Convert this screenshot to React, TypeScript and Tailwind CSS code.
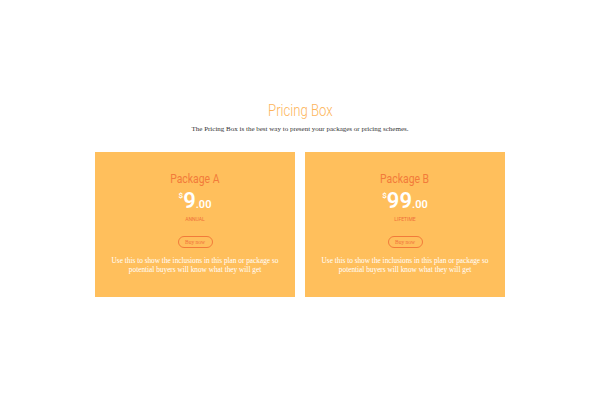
const plans = [
  { name: "Package A", price: "9", term: "ANNUAL" },
  { name: "Package B", price: "99", term: "LIFETIME" },
];

const Card = ({ name, price, term }: { name: string; price: string; term: string }) => {
  return (
    <div className="w-[200px] h-[145px] bg-[#ffbf5c] flex flex-col items-center pt-[19px]">
      <p className="font-['Roboto',sans-serif] text-[13px] leading-[15px] text-[#f27b3a] scale-x-[0.8]">{name}</p>
      <div className="flex items-start mt-[4px] text-white font-['Roboto',sans-serif] font-semibold">
        <span className="text-[8px] leading-[10px] mt-[1px]">$</span>
        <span className="text-[22px] leading-[22px]">{price}</span>
        <span className="text-[11px] leading-[11px] mt-[9px]">.00</span>
      </div>
      <p className="mt-[4px] font-['Roboto',sans-serif] text-[5px] leading-[6px] text-[#f0703a]">{term}</p>
      <div className="mt-[14px] w-[35px] h-[12px] border border-[#f27b3a] rounded-full flex items-center justify-center font-['Liberation_Serif',serif] text-[5.5px] text-[#f0703a]">
        Buy now
      </div>
      <p className="mt-[8px] w-[174px] text-center font-['Liberation_Serif',serif] text-[7.3px] leading-[9px] text-white">
        Use this to show the inclusions in this plan or package so potential buyers will know what they will get
      </p>
    </div>
  );
};

export default function App() {
  return (
    <div className="w-[600px] h-[400px] bg-white flex flex-col items-center pt-[101px]">
      <h1 className="font-['Roboto',sans-serif] font-light text-[16px] leading-[20px] text-[#fdb55a] scale-x-[0.82]">Pricing Box</h1>
      <p className="mt-[3px] font-['Liberation_Serif',serif] text-[7px] leading-[10px] text-[#333]">
        The Pricing Box is the best way to present your packages or pricing schemes.
      </p>
      <div className="mt-[18px] flex gap-[10px]">
        {plans.map((p) => (
          <Card key={p.name} {...p} />
        ))}
      </div>
    </div>
  );
}
